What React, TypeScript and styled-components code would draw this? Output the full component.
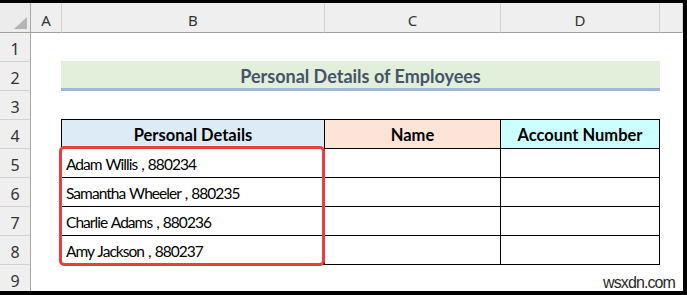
import React from "react";
import styled, { createGlobalStyle } from "styled-components";

const Global = createGlobalStyle`
  html, body { margin: 0; padding: 0; width: 687px; height: 295px; overflow: hidden; background: #000; }
  * { box-sizing: border-box; }
`;

const Frame = styled.div`
  width: 687px;
  height: 295px;
  padding: 3px 4px 4px 0;
  background: #000;
`;

const Sheet = styled.div`
  position: relative;
  height: 100%;
  overflow: hidden;
  background: #fff;
  display: grid;
  grid-template-columns: 31px 31px 263px 176px 159px 1fr;
  grid-template-rows: 30px repeat(9, 29px);
  font-family: Lato, "Open Sans", sans-serif;
`;

const Corner = styled.div`
  grid-column: 1;
  grid-row: 1;
  background: #ececec;
  border-right: 1px solid #a8a8a8;
  border-bottom: 1px solid #a0a0a0;
  position: relative;
`;

const Triangle = styled.svg`
  position: absolute;
  left: 14px;
  top: 14px;
`;

const ColHead = styled.div<{ $col: number }>`
  grid-column: ${(p) => p.$col};
  grid-row: 1;
  background: #efefef;
  border-right: 1px solid #d2d2d2;
  border-bottom: 1px solid #9f9f9f;
  display: flex;
  align-items: flex-end;
  justify-content: center;
  padding-bottom: 2px;
  font-family: "Noto Sans", sans-serif;
  font-size: 15px;
  color: #333;
`;

const RowHead = styled.div<{ $row: number }>`
  grid-column: 1;
  grid-row: ${(p) => p.$row};
  background: #efefef;
  border-right: 1px solid #a8a8a8;
  border-bottom: 1px solid #d2d2d2;
  display: flex;
  align-items: flex-end;
  justify-content: center;
  padding-bottom: 1px;
  font-family: "Noto Sans", sans-serif;
  font-size: 16px;
  color: #333;
`;

const Title = styled.div`
  grid-column: 3 / 6;
  grid-row: 3;
  margin: -1px 0 0 -1px;
  background: #e2efda;
  border-bottom: 3px solid #a3b5d6;
  display: flex;
  align-items: center;
  justify-content: center;
  padding-top: 3px;
  font-weight: 700;
  font-size: 18px;
  color: #44546a;
`;

const HeadCell = styled.div<{ $col: number; $bg: string; $first?: boolean }>`
  grid-column: ${(p) => p.$col};
  grid-row: 5;
  margin-top: -1px;
  margin-left: ${(p) => (p.$first ? "-1px" : "0")};
  background: ${(p) => p.$bg};
  border-top: 1px solid #000;
  border-left: ${(p) => (p.$first ? "1px solid #000" : "none")};
  border-right: 1px solid #000;
  border-bottom: 1px solid #000;
  display: flex;
  align-items: center;
  justify-content: center;
  padding-top: 2px;
  font-weight: 700;
  font-size: 16.5px;
  color: #000;
`;

const Cell = styled.div<{ $col: number; $row: number; $first?: boolean }>`
  grid-column: ${(p) => p.$col};
  grid-row: ${(p) => p.$row};
  margin-left: ${(p) => (p.$first ? "-1px" : "0")};
  border-left: ${(p) => (p.$first ? "1px solid #000" : "none")};
  border-right: 1px solid #000;
  border-bottom: 1px solid #000;
  display: flex;
  align-items: center;
  padding: 1px 0 0 4px;
  font-size: 15.5px;
  letter-spacing: -0.95px;
  word-spacing: 1px;
  color: #000;
  white-space: nowrap;
`;

const Highlight = styled.div`
  position: absolute;
  left: 59px;
  top: 143px;
  width: 266px;
  height: 120px;
  border: 3.5px solid #e63f40;
  border-radius: 5px;
  pointer-events: none;
`;

const Watermark = styled.div`
  position: absolute;
  right: 8px;
  bottom: 0;
  font-family: "Liberation Sans", Arial, sans-serif;
  font-size: 16px;
  letter-spacing: -0.9px;
  line-height: 16px;
  color: #2a2a2a;
`;

const cols = ["A", "B", "C", "D", ""];
const people = [
  "Adam Willis , 880234",
  "Samantha Wheeler , 880235",
  "Charlie Adams , 880236",
  "Amy Jackson , 880237",
];

export default function App() {
  return (
    <>
      <Global />
      <Frame>
        <Sheet>
          <Corner>
            <Triangle width="13" height="12" viewBox="0 0 13 12">
              <polygon points="13,0 13,12 0,12" fill="#b5b5b5" />
            </Triangle>
          </Corner>
          {cols.map((c, i) => (
            <ColHead key={i} $col={i + 2}>
              {c}
            </ColHead>
          ))}
          {Array.from({ length: 9 }, (_, i) => (
            <RowHead key={i} $row={i + 2}>
              {i + 1}
            </RowHead>
          ))}
          <Title>Personal Details of Employees</Title>
          <HeadCell $col={3} $bg="#ddebf7" $first>
            Personal Details
          </HeadCell>
          <HeadCell $col={4} $bg="#fce4d6">
            Name
          </HeadCell>
          <HeadCell $col={5} $bg="#ccffff">
            Account Number
          </HeadCell>
          {people.map((p, i) => (
            <React.Fragment key={p}>
              <Cell $col={3} $row={i + 6} $first>
                {p}
              </Cell>
              <Cell $col={4} $row={i + 6} />
              <Cell $col={5} $row={i + 6} />
            </React.Fragment>
          ))}
          <Highlight />
          <Watermark>wsxdn.com</Watermark>
        </Sheet>
      </Frame>
    </>
  );
}
